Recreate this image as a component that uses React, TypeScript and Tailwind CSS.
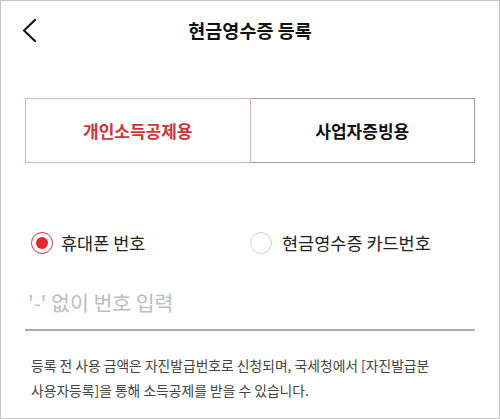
import { useState } from "react";

const FONT = { fontFamily: '"Noto Sans CJK KR", "Noto Sans", sans-serif' };

function Radio({ checked }: { checked: boolean }) {
  if (checked) {
    return (
      <span className="flex h-[22px] w-[22px] shrink-0 items-center justify-center rounded-full border-[1.5px] border-[#d8343a]">
        <span className="h-[12px] w-[12px] rounded-full bg-[#e4262d]" />
      </span>
    );
  }
  return <span className="h-[22px] w-[22px] shrink-0 rounded-full border-[1.5px] border-[#d4d4d4]" />;
}

export default function App() {
  const [tab, setTab] = useState<"personal" | "business">("personal");
  const [kind, setKind] = useState<"phone" | "card">("phone");

  return (
    <div
      className="h-[419px] w-[500px] overflow-hidden border border-[#c4c4c4] bg-white text-[#1a1a1a]"
      style={FONT}
    >
      {/* Header */}
      <div className="flex h-[60px] items-center px-[21px]">
        <button type="button" className="flex h-[28px] w-[20px] items-center">
          <svg width="16" height="26" viewBox="0 0 16 26" fill="none">
            <path d="M13 2 L2 12.5 L13 23" stroke="#111" strokeWidth="2" strokeLinecap="square" />
          </svg>
        </button>
        <h1 className="flex-1 text-center text-[18.5px] font-bold text-[#111]">
          현금영수증 등록
        </h1>
        <div className="w-[20px]" />
      </div>

      {/* Tabs */}
      <div className="mx-[24px] mt-[37px] flex h-[65px]">
        <button
          type="button"
          onClick={() => setTab("personal")}
          className={`flex-1 border text-[17px] font-semibold ${
            tab === "personal"
              ? "border-[#d9b3b5] text-[#d3333a]"
              : "border-[#9c9c9c] border-r-0 text-[#111]"
          }`}
        >
          개인소득공제용
        </button>
        <button
          type="button"
          onClick={() => setTab("business")}
          className={`flex-1 border text-[17px] font-semibold ${
            tab === "business"
              ? "border-[#d9b3b5] text-[#d3333a]"
              : "border-l-0 border-[#9c9c9c] text-[#111]"
          }`}
        >
          사업자증빙용
        </button>
      </div>

      {/* Radio options */}
      <div className="mx-[24px] mt-[67px] grid h-[24px] grid-cols-2">
        <button
          type="button"
          onClick={() => setKind("phone")}
          className="flex items-center gap-[8px] pl-[6px] text-[17.5px] text-[#222]"
        >
          <Radio checked={kind === "phone"} />
          휴대폰 번호
        </button>
        <button
          type="button"
          onClick={() => setKind("card")}
          className="flex items-center gap-[10px] pl-0 text-[17.5px] text-[#222]"
        >
          <Radio checked={kind === "card"} />
          현금영수증 카드번호
        </button>
      </div>

      {/* Number input */}
      <div className="mx-[24px] mt-[36px] border-b-2 border-[#ababab] pb-[15px] pl-[3px]">
        <input
          type="text"
          placeholder="'-' 없이 번호 입력"
          className="block h-[24px] w-full bg-transparent text-[20.5px] leading-[24px] text-[#222] outline-none placeholder:text-[#bcbcbc]"
          style={FONT}
        />
      </div>

      {/* Notice */}
      <p className="ml-[30px] mr-[24px] mt-[22px] text-[13.8px] leading-[25px] text-[#444]">
        등록 전 사용 금액은 자진발급번호로 신청되며, 국세청에서 [자진발급분
        <br />
        사용자등록]을 통해 소득공제를 받을 수 있습니다.
      </p>
    </div>
  );
}
